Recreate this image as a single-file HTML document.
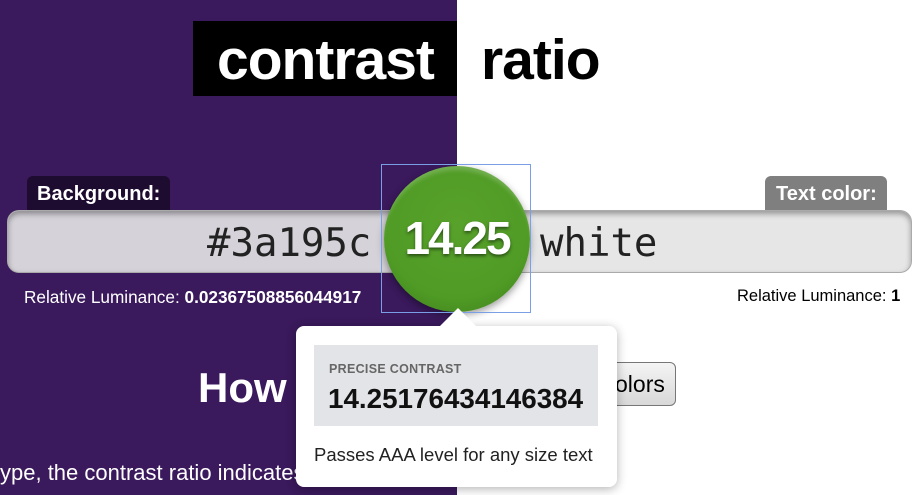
<!DOCTYPE html>
<html><head><style>
body{margin:0;width:920px;height:495px;overflow:hidden;position:relative;font-family:"Liberation Sans",Arial,sans-serif;background:#fff}
.abs{position:absolute}
</style></head><body>
<div class="abs" style="left:0;top:0;width:457px;height:495px;background:#3a195c"></div>
<div class="abs" style="left:193px;top:21px;width:264px;height:75px;background:#000"></div>
<div class="abs" style="left:217px;top:27px;font-size:57px;font-weight:bold;color:#fff;letter-spacing:-1px">contrast</div>
<div class="abs" style="left:481px;top:27px;font-size:57px;font-weight:bold;color:#000;letter-spacing:-1px">ratio</div>

<div class="abs" style="left:27px;top:176px;width:143px;height:40px;background:#1e0c30;border-radius:6px 6px 0 0"></div>
<div class="abs" style="left:37px;top:183px;font-size:20px;font-weight:bold;color:#fff">Background:</div>
<div class="abs" style="left:765px;top:176px;width:122px;height:40px;background:#7f7f7f;border-radius:6px 6px 0 0"></div>
<div class="abs" style="left:776px;top:183px;font-size:20px;font-weight:bold;color:#fff">Text color:</div>

<div class="abs" style="left:7px;top:210px;width:905px;height:63px;border-radius:12px;background:linear-gradient(90deg,#d5d2d9 0,#d5d2d9 450px,#e6e6e6 450px);box-shadow:inset 0 3px 6px rgba(0,0,0,.35);border:1px solid #aaa;box-sizing:border-box"></div>
<div class="abs" style="left:207px;top:221px;font-family:'DejaVu Sans Mono','Liberation Mono',monospace;font-size:39px;color:#222">#3a195c</div>
<div class="abs" style="left:540px;top:221px;font-family:'DejaVu Sans Mono','Liberation Mono',monospace;font-size:39px;color:#222">white</div>

<div class="abs" style="left:24px;top:287px;font-size:17.2px;color:#fff">Relative Luminance: <b>0.02367508856044917</b></div>
<div class="abs" style="left:737px;top:287px;font-size:16.5px;color:#000">Relative Luminance: <b>1</b></div>

<div class="abs" style="left:198px;top:364px;font-size:42px;font-weight:bold;color:#fff">How</div>
<div class="abs" style="left:590px;top:362px;width:86px;height:44px;border:1px solid #777;border-radius:6px;background:linear-gradient(#f4f4f4,#d8d8d8);box-sizing:border-box;font-size:23px;padding:8px 0 0 24px">olors</div>
<div class="abs" style="left:0;top:460px;font-size:22px;color:#fff;white-space:nowrap">ype, the contrast ratio indicates</div>

<div class="abs" style="left:384px;top:166px;width:146px;height:146px;border-radius:50%;background:radial-gradient(circle at 50% 40%,#58a22b,#4f9b25 65%,#3d7a1a);box-shadow:0 3px 8px rgba(0,0,0,.4)"></div>
<div class="abs" style="left:384px;top:166px;width:146px;height:146px;border-radius:50%;box-shadow:inset 0 6px 4px -2px rgba(255,255,255,.2)"></div>
<div class="abs" style="left:384px;top:211px;width:146px;text-align:center;font-size:46px;font-weight:bold;color:#fff;letter-spacing:-2px;text-shadow:0 2px 3px rgba(0,0,0,.5)">14.25</div>
<div class="abs" style="left:381px;top:164px;width:150px;height:149px;border:1px solid #7b9fe6;box-sizing:border-box"></div>

<div class="abs" style="left:296px;top:326px;width:321px;height:161px;background:#fff;border-radius:8px;box-shadow:0 2px 10px rgba(0,0,0,.3)"></div>
<div class="abs" style="left:440px;top:308px;width:0;height:0;border-left:18px solid transparent;border-right:18px solid transparent;border-bottom:18px solid #fff"></div>
<div class="abs" style="left:314px;top:345px;width:284px;height:81px;background:#e3e4e7"></div>
<div class="abs" style="left:329px;top:362px;font-size:12.5px;font-weight:bold;color:#666;letter-spacing:.3px">PRECISE CONTRAST</div>
<div class="abs" style="left:328px;top:383px;font-size:27.8px;font-weight:bold;color:#111">14.25176434146384</div>
<div class="abs" style="left:314px;top:444px;font-size:18.5px;color:#222">Passes AAA level for any size text</div>
</body></html>
